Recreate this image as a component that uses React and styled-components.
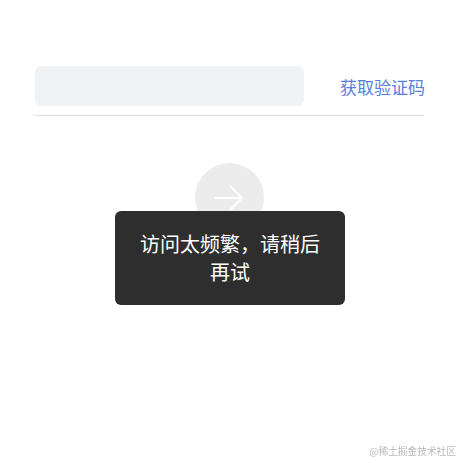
import React from "react";
import styled, { createGlobalStyle } from "styled-components";

const GlobalStyle = createGlobalStyle`
  html, body {
    margin: 0;
    padding: 0;
    background: #fff;
    font-family: "Noto Sans CJK SC", "Noto Sans", sans-serif;
  }
`;

const Page = styled.div`
  width: 460px;
  height: 460px;
  padding: 66px 36px 0 35px;
  box-sizing: border-box;
  display: flex;
  flex-direction: column;
`;

const CodeRow = styled.div`
  display: flex;
  align-items: center;
  justify-content: space-between;
  padding-bottom: 9px;
  border-bottom: 1px solid #dcdcdc;
`;

const CodeInput = styled.input`
  width: 269px;
  height: 40px;
  border: none;
  outline: none;
  border-radius: 6px;
  background: #f1f2f4;
  padding: 0 12px;
  box-sizing: border-box;
  font-size: 16px;
`;

const SendCode = styled.button`
  border: none;
  background: none;
  padding: 0;
  margin-right: -1px;
  color: #5a7de0;
  font-family: "Noto Sans CJK SC", sans-serif;
  font-size: 17px;
  cursor: pointer;
`;

const Submit = styled.button`
  align-self: center;
  margin-top: 47px;
  margin-left: -1px;
  width: 69px;
  height: 69px;
  border-radius: 50%;
  border: none;
  background: #ececec;
  display: flex;
  align-items: center;
  justify-content: center;
  padding: 0;
`;

const Toast = styled.div`
  position: fixed;
  left: 115px;
  top: 211px;
  width: 230px;
  height: 94px;
  box-sizing: border-box;
  padding: 19px 22px;
  border-radius: 6px;
  background: #2e2e2e;
  color: #fff;
  font-size: 20px;
  line-height: 28px;
  text-align: center;
`;

const Watermark = styled.div`
  position: fixed;
  right: 4px;
  bottom: 2px;
  color: #b9b9b9;
  font-size: 9.7px;
  line-height: 14px;
`;

const App = () => (
  <>
    <GlobalStyle />
    <Page>
      <CodeRow>
        <CodeInput type="text" />
        <SendCode>获取验证码</SendCode>
      </CodeRow>
      <Submit>
        <svg width="30" height="26" viewBox="0 0 30 26" fill="none" stroke="#fff" strokeWidth="2">
          <path d="M1 13h27" />
          <path d="M16 1l12 12-12 12" />
        </svg>
      </Submit>
    </Page>
    <Toast>访问太频繁，请稍后再试</Toast>
    <Watermark>@稀土掘金技术社区</Watermark>
  </>
);

export default App;
